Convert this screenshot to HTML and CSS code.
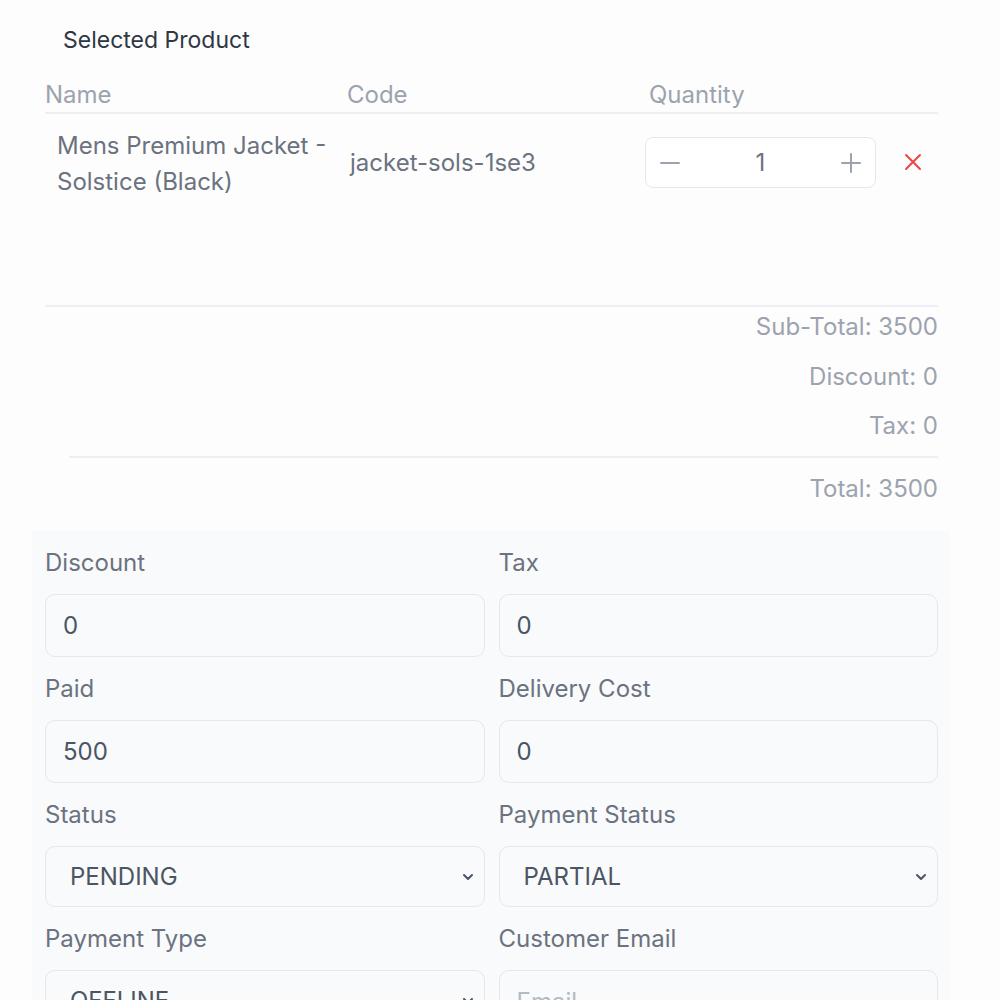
FILE: index.html
```html
<!DOCTYPE html>
<html lang="en">
<head>
<meta charset="utf-8">
<title>Selected Product</title>
<link rel="stylesheet" href="styles.css">
</head>
<body>
<div class="page">
  <h2 class="section-title">Selected Product</h2>
  <div class="table">
    <div class="thead">
      <div class="th">Name</div>
      <div class="th">Code</div>
      <div class="th">Quantity</div>
    </div>
    <div class="trow">
      <div class="td td-name">Mens Premium Jacket - Solstice (Black)</div>
      <div class="td td-code">jacket-sols-1se3</div>
      <div class="td td-qty">
        <div class="stepper">
          <button class="step-btn" type="button" aria-label="Decrease">
            <svg width="22" height="22" viewBox="0 0 22 22"><path d="M2 11h18" stroke="#9ca3af" stroke-width="2" stroke-linecap="round"/></svg>
          </button>
          <span class="step-val">1</span>
          <button class="step-btn" type="button" aria-label="Increase">
            <svg width="22" height="22" viewBox="0 0 22 22"><path d="M2 11h18M11 2v18" stroke="#9ca3af" stroke-width="2" stroke-linecap="round"/></svg>
          </button>
        </div>
        <button class="remove" type="button" aria-label="Remove">
          <svg width="20" height="20" viewBox="0 0 20 20"><path d="M3 3l14 14M17 3L3 17" stroke="#ef4444" stroke-width="2" stroke-linecap="round"/></svg>
        </button>
      </div>
    </div>
  </div>
  <div class="totals">
    <div class="total-line">Sub-Total: 3500</div>
    <div class="total-line">Discount: 0</div>
    <div class="total-line">Tax: 0</div>
    <div class="total-line grand">Total: 3500</div>
  </div>
</div>
<div class="form-panel">
  <div class="field">
    <label class="field-label">Discount</label>
    <input class="field-input" type="text" value="0">
  </div>
  <div class="field">
    <label class="field-label">Tax</label>
    <input class="field-input" type="text" value="0">
  </div>
  <div class="field">
    <label class="field-label">Paid</label>
    <input class="field-input" type="text" value="500">
  </div>
  <div class="field">
    <label class="field-label">Delivery Cost</label>
    <input class="field-input" type="text" value="0">
  </div>
  <div class="field">
    <label class="field-label">Status</label>
    <div class="select-wrap">
      <select class="field-select"><option>PENDING</option></select>
      <svg class="chevron" width="14" height="14" viewBox="0 0 14 14"><path d="M3 5l4 4 4-4" fill="none" stroke="#4b5563" stroke-width="2" stroke-linecap="round" stroke-linejoin="round"/></svg>
    </div>
  </div>
  <div class="field">
    <label class="field-label">Payment Status</label>
    <div class="select-wrap">
      <select class="field-select"><option>PARTIAL</option></select>
      <svg class="chevron" width="14" height="14" viewBox="0 0 14 14"><path d="M3 5l4 4 4-4" fill="none" stroke="#4b5563" stroke-width="2" stroke-linecap="round" stroke-linejoin="round"/></svg>
    </div>
  </div>
  <div class="field">
    <label class="field-label">Payment Type</label>
    <div class="select-wrap">
      <select class="field-select"><option>OFFLINE</option></select>
      <svg class="chevron" width="14" height="14" viewBox="0 0 14 14"><path d="M3 5l4 4 4-4" fill="none" stroke="#4b5563" stroke-width="2" stroke-linecap="round" stroke-linejoin="round"/></svg>
    </div>
  </div>
  <div class="field">
    <label class="field-label">Customer Email</label>
    <input class="field-input" type="text" placeholder="Email">
  </div>
</div>
</body>
</html>
```
FILE: styles.css
```css
* { box-sizing: border-box; }
html, body { margin: 0; padding: 0; }
body {
  background: #fdfdfd;
  font-family: Inter, "Noto Sans", sans-serif;
  font-size: 24px;
  color: #6b7280;
}
.page {
  padding: 24px 62px 0 45px;
}
.section-title {
  margin: 0 0 0 18px;
  font-size: 23px;
  font-weight: 400;
  line-height: 32px;
  color: #2f3744;
}
.table {
  margin-top: 24px;
}
.thead {
  display: grid;
  grid-template-columns: 302px 302px 1fr;
  border-bottom: 2px solid #eeeff2;
  height: 34px;
}
.th {
  color: #9ca3af;
  line-height: 30px;
}
.trow {
  display: grid;
  grid-template-columns: 302px 302px 1fr;
  height: 193px;
  border-bottom: 2px solid #eeeff2;
  padding-top: 14px;
}
.td-name {
  padding-left: 12px;
  line-height: 36px;
  color: #6b7280;
}
.td-code {
  padding-left: 3px;
  padding-top: 20px;
  color: #6b7280;
}
.td-qty {
  display: flex;
  align-items: flex-start;
  margin-left: -4px;
  padding-top: 9px;
}
.stepper {
  width: 231px;
  height: 51px;
  display: flex;
  align-items: center;
  justify-content: space-between;
  border: 1.5px solid #e5e7eb;
  border-radius: 8px;
  background: #fff;
  padding: 0 13px;
}
.step-btn {
  border: 0;
  background: none;
  padding: 0;
  display: flex;
}
.step-val {
  font-size: 24px;
  color: #6b7280;
}
.remove {
  border: 0;
  background: none;
  padding: 0;
  margin: 15px 0 0 27px;
  display: flex;
}
.totals {
  display: flex;
  flex-direction: column;
  align-items: flex-end;
  color: #9ca3af;
}
.total-line {
  line-height: 30px;
  margin-top: 5px;
  margin-bottom: 15px;
}
.total-line:first-child {
  margin-top: 5px;
}
.total-line:nth-child(3) {
  margin-top: 4px;
}
.total-line.grand {
  align-self: stretch;
  text-align: right;
  margin-left: 24px;
  border-top: 2px solid #eeeff2;
  padding-top: 16px;
  margin-top: 0;
  margin-bottom: 0;
}
.form-panel {
  margin: 27px 50px 0 32px;
  background: #f9fafb;
  padding: 17px 12px 20px 13px;
  display: grid;
  grid-template-columns: 1fr 1fr;
  column-gap: 14px;
  row-gap: 17px;
}
.field {
  display: flex;
  flex-direction: column;
}
.field-label {
  line-height: 30px;
  height: 30px;
  margin-bottom: 16px;
  color: #6b7280;
}
.field-input {
  height: 63px;
  border: 1.5px solid #e5e7eb;
  border-radius: 10px;
  background: #f9fafb;
  font-family: inherit;
  font-size: 24px;
  color: #4b5563;
  padding: 0 17px;
  outline: none;
}
.field-input::placeholder {
  color: #b4b9c2;
}
.select-wrap {
  position: relative;
}
.field-select {
  width: 100%;
  height: 61px;
  appearance: none;
  -webkit-appearance: none;
  border: 1.5px solid #e5e7eb;
  border-radius: 10px;
  background: #f9fafb;
  font-family: inherit;
  font-size: 24px;
  color: #4b5563;
  padding: 0 24px;
  outline: none;
}
.chevron {
  position: absolute;
  right: 10px;
  top: 24px;
  pointer-events: none;
}
```
